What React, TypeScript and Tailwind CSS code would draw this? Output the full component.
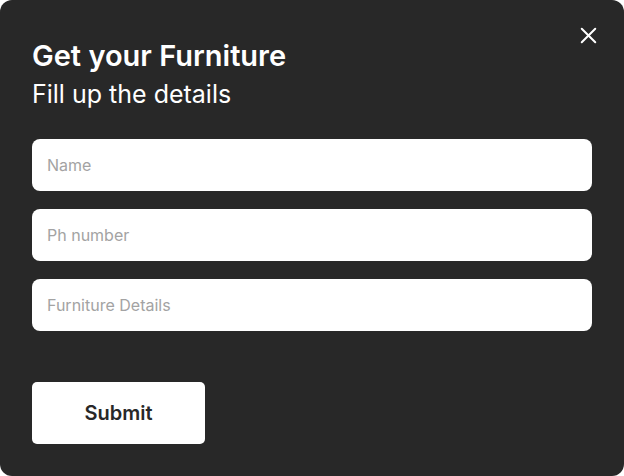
import { X } from 'lucide-react';

export default function App() {
  return (
    <div className="w-[624px] h-[476px] bg-white" style={{ fontFamily: "Inter, 'Noto Sans', sans-serif" }}>
      <div className="relative w-full h-full bg-[#282828] rounded-xl px-8 pt-[38px]">
        <button className="absolute right-[22px] top-[22px] text-white">
          <X size={27} strokeWidth={1.8} />
        </button>

        <h1 className="text-[29px] leading-[35px] font-semibold text-white">Get your Furniture</h1>
        <p className="mt-[6px] text-[25px] leading-[30px] text-white">Fill up the details</p>

        <form className="mt-[30px] flex flex-col gap-[18px]" onSubmit={e => e.preventDefault()}>
          {['Name', 'Ph number', 'Furniture Details'].map(ph => (
            <input
              key={ph}
              placeholder={ph}
              className="w-[560px] h-[52px] rounded-lg bg-white px-[15px] text-[16px] text-[#282828] placeholder:text-[#a3a3a3] outline-none"
            />
          ))}
          <button
            type="submit"
            className="mt-[33px] w-[173px] h-[62px] rounded-[5px] bg-white text-[20px] font-semibold text-[#282828]"
          >
            Submit
          </button>
        </form>
      </div>
    </div>
  );
}
